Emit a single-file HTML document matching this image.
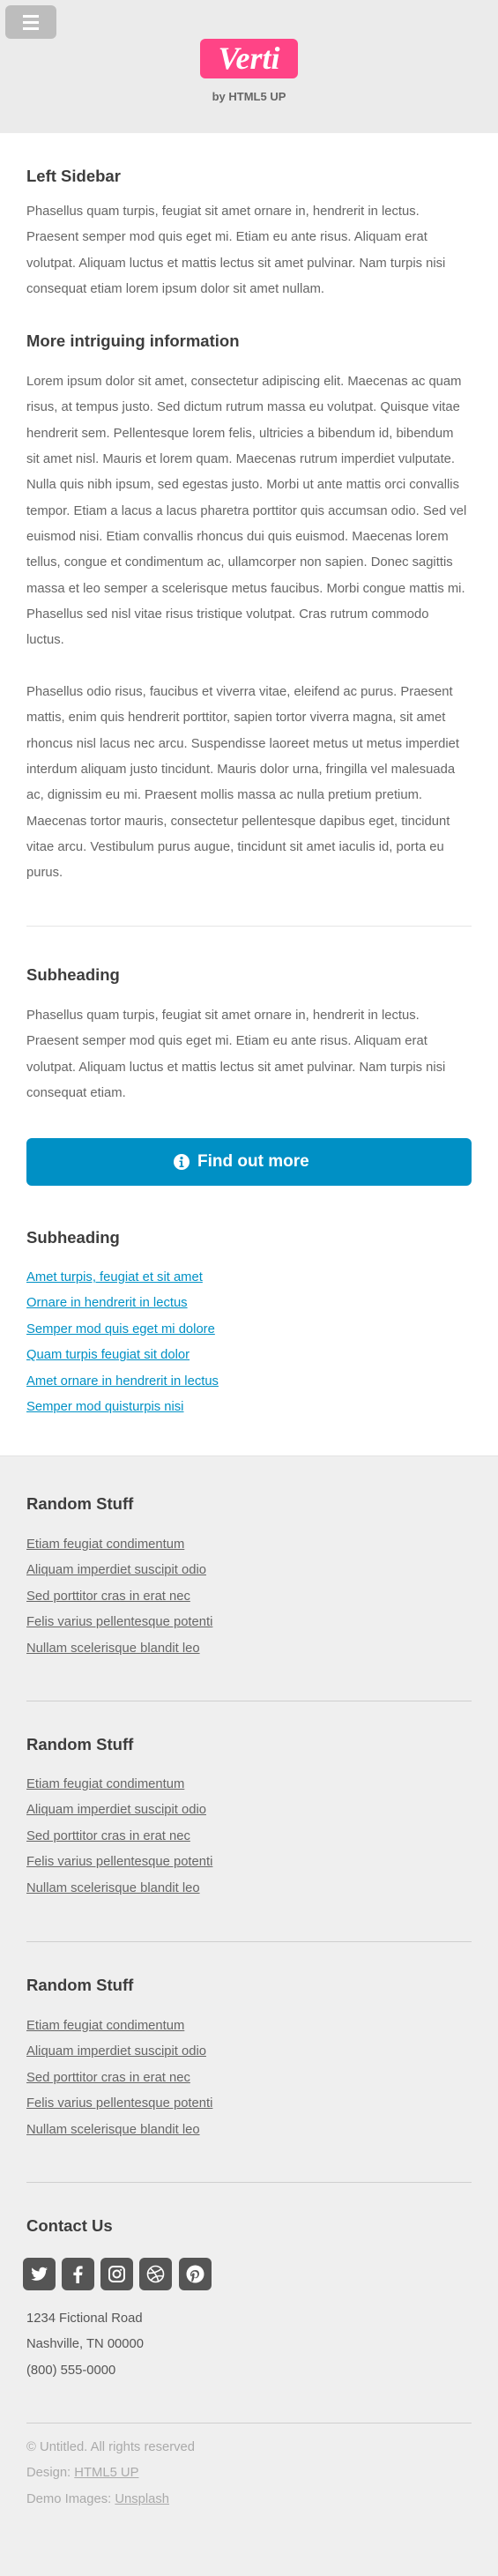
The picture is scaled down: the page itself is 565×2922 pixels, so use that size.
<!DOCTYPE html>
<html><head><meta charset="utf-8">
<style>
*{margin:0;padding:0;box-sizing:border-box}
html,body{width:565px;height:2922px;overflow:hidden}
body{position:relative;background:#efefef;font-family:"Liberation Sans",sans-serif;color:#666}
.abs{position:absolute}
#header{left:0;top:0;width:565px;height:151px;background:#ebebeb}
#main{left:0;top:151px;width:565px;height:1501px;background:#fff;border-bottom:1px solid #e2e2e2}
#footer{left:0;top:1652px;width:565px;height:1270px;background:#efefef}
.h{left:30px;font-weight:bold;font-size:18.5px;line-height:20px;color:#3d3d3d;white-space:nowrap}
.p{left:30px;font-size:14.8px;line-height:29.35px;color:#666;white-space:nowrap}
.hr{left:30px;width:505px;height:1px}
.links a{display:block;color:#0090c5;text-decoration:underline}
.flinks a{display:block;color:#666;text-decoration:underline}
.soc{width:37px;height:37px;border-radius:6px;background:#555;top:2561px}
.soc svg{position:absolute;left:0;top:0}
</style></head><body>
<div id="header" class="abs"></div>
<div class="abs" style="left:6px;top:6px;width:58px;height:38px;border-radius:6px;background:#bdbdbd"></div>
<div class="abs" style="left:26px;top:17px;width:18px;height:3px;background:#fff"></div>
<div class="abs" style="left:26px;top:24px;width:18px;height:3px;background:#fff"></div>
<div class="abs" style="left:26px;top:31px;width:18px;height:3px;background:#fff"></div>
<div class="abs" style="left:227px;top:44px;width:111px;height:45px;border-radius:6px;background:#ff4486;color:#fff;font-family:'Liberation Serif',serif;font-style:italic;font-weight:bold;font-size:36px;line-height:45px;text-align:center">Verti</div>
<div class="abs" style="left:0;width:565px;top:102px;text-align:center;font-size:13px;font-weight:bold;line-height:16px;color:#666">by HTML5 UP</div>

<div id="main" class="abs"></div>
<div class="abs h" style="top:190px">Left Sidebar</div>
<div class="abs p" style="top:226px">Phasellus quam turpis, feugiat sit amet ornare in, hendrerit in lectus.<br>Praesent semper mod quis eget mi. Etiam eu ante risus. Aliquam erat<br>volutpat. Aliquam luctus et mattis lectus sit amet pulvinar. Nam turpis nisi<br>consequat etiam lorem ipsum dolor sit amet nullam.</div>
<div class="abs h" style="top:377px">More intriguing information</div>
<div class="abs p" style="top:419px">Lorem ipsum dolor sit amet, consectetur adipiscing elit. Maecenas ac quam<br>risus, at tempus justo. Sed dictum rutrum massa eu volutpat. Quisque vitae<br>hendrerit sem. Pellentesque lorem felis, ultricies a bibendum id, bibendum<br>sit amet nisl. Mauris et lorem quam. Maecenas rutrum imperdiet vulputate.<br>Nulla quis nibh ipsum, sed egestas justo. Morbi ut ante mattis orci convallis<br>tempor. Etiam a lacus a lacus pharetra porttitor quis accumsan odio. Sed vel<br>euismod nisi. Etiam convallis rhoncus dui quis euismod. Maecenas lorem<br>tellus, congue et condimentum ac, ullamcorper non sapien. Donec sagittis<br>massa et leo semper a scelerisque metus faucibus. Morbi congue mattis mi.<br>Phasellus sed nisl vitae risus tristique volutpat. Cras rutrum commodo<br>luctus.</div>
<div class="abs p" style="top:771px">Phasellus odio risus, faucibus et viverra vitae, eleifend ac purus. Praesent<br>mattis, enim quis hendrerit porttitor, sapien tortor viverra magna, sit amet<br>rhoncus nisl lacus nec arcu. Suspendisse laoreet metus ut metus imperdiet<br>interdum aliquam justo tincidunt. Mauris dolor urna, fringilla vel malesuada<br>ac, dignissim eu mi. Praesent mollis massa ac nulla pretium pretium.<br>Maecenas tortor mauris, consectetur pellentesque dapibus eget, tincidunt<br>vitae arcu. Vestibulum purus augue, tincidunt sit amet iaculis id, porta eu<br>purus.</div>
<div class="abs hr" style="top:1050px;background:#e6e6e6"></div>
<div class="abs h" style="top:1096px">Subheading</div>
<div class="abs p" style="top:1138px">Phasellus quam turpis, feugiat sit amet ornare in, hendrerit in lectus.<br>Praesent semper mod quis eget mi. Etiam eu ante risus. Aliquam erat<br>volutpat. Aliquam luctus et mattis lectus sit amet pulvinar. Nam turpis nisi<br>consequat etiam.</div>
<div class="abs" style="left:30px;top:1291px;width:505px;height:54px;border-radius:6px;background:#0090c5"></div>
<svg class="abs" style="left:196px;top:1308px" width="20" height="20" viewBox="0 0 20 20"><circle cx="10" cy="10" r="9" fill="#fff"/><circle cx="10" cy="5.6" r="1.6" fill="#0090c5"/><path d="M7.5 8.5h3.5v6h1.5v1.5h-5v-1.5h1.5v-4.5h-1.5z" fill="#0090c5"/></svg>
<div class="abs" style="left:224px;top:1307px;font-size:19px;font-weight:bold;color:#fff;line-height:22px;white-space:nowrap">Find out more</div>
<div class="abs h" style="top:1394px">Subheading</div>
<div class="abs p links" style="top:1435px;line-height:29.4px"><a>Amet turpis, feugiat et sit amet</a><a>Ornare in hendrerit in lectus</a><a>Semper mod quis eget mi dolore</a><a>Quam turpis feugiat sit dolor</a><a>Amet ornare in hendrerit in lectus</a><a>Semper mod quisturpis nisi</a></div>

<div id="footer" class="abs"></div>
<div class="abs h" style="top:1696px">Random Stuff</div>
<div class="abs p flinks" style="top:1738px;line-height:29.4px"><a>Etiam feugiat condimentum</a><a>Aliquam imperdiet suscipit odio</a><a>Sed porttitor cras in erat nec</a><a>Felis varius pellentesque potenti</a><a>Nullam scelerisque blandit leo</a></div>
<div class="abs hr" style="top:1929px;background:#cfcfcf"></div>
<div class="abs h" style="top:1969px">Random Stuff</div>
<div class="abs p flinks" style="top:2010px;line-height:29.4px"><a>Etiam feugiat condimentum</a><a>Aliquam imperdiet suscipit odio</a><a>Sed porttitor cras in erat nec</a><a>Felis varius pellentesque potenti</a><a>Nullam scelerisque blandit leo</a></div>
<div class="abs hr" style="top:2202px;background:#cfcfcf"></div>
<div class="abs h" style="top:2242px">Random Stuff</div>
<div class="abs p flinks" style="top:2284px;line-height:29.4px"><a>Etiam feugiat condimentum</a><a>Aliquam imperdiet suscipit odio</a><a>Sed porttitor cras in erat nec</a><a>Felis varius pellentesque potenti</a><a>Nullam scelerisque blandit leo</a></div>
<div class="abs hr" style="top:2475px;background:#cfcfcf"></div>
<div class="abs h" style="top:2515px">Contact Us</div>

<div class="abs soc" style="left:26px"><svg width="37" height="37" viewBox="0 0 37 37"><path d="M28 12.5c-.7.3-1.4.5-2.2.6.8-.5 1.4-1.2 1.7-2.1-.7.4-1.6.8-2.4.9-.7-.8-1.7-1.2-2.8-1.2-2.1 0-3.9 1.7-3.9 3.9 0 .3 0 .6.1.9-3.2-.2-6.1-1.700-8-4.1-.3.6-.5 1.2-.5 1.9 0 1.3.7 2.5 1.7 3.2-.6 0-1.2-.2-1.800-.5 0 1.9 1.3 3.5 3.1 3.8-.3.1-.7.1-1 .1-.3 0-.5 0-.7-.1.5 1.5 1.9 2.7 3.6 2.7-1.3 1-3 1.7-4.8 1.7-.3 0-.6 0-.9-.1 1.7 1.1 3.8 1.8 5.9 1.8 7.1 0 11-5.9 11-11v-.5c.8-.6 1.4-1.2 1.9-2z" fill="#fff"/></svg></div>
<div class="abs soc" style="left:70px"><svg width="37" height="37" viewBox="0 0 37 37"><path d="M20 29v-9h3l.5-3.5H20v-2.2c0-1 .3-1.7 1.7-1.7h1.9V9.5c-.3 0-1.4-.1-2.7-.1-2.7 0-4.5 1.6-4.5 4.6v2.6h-3V20h3v9z" fill="#fff"/></svg></div>
<div class="abs soc" style="left:114px"><svg width="37" height="37" viewBox="0 0 37 37"><rect x="10" y="10" width="17" height="17" rx="4.5" fill="none" stroke="#fff" stroke-width="2"/><circle cx="18.5" cy="18.5" r="4" fill="none" stroke="#fff" stroke-width="2"/><circle cx="23.2" cy="13.8" r="1.1" fill="#fff"/></svg></div>
<div class="abs soc" style="left:158px"><svg width="37" height="37" viewBox="0 0 37 37"><g fill="none" stroke="#fff" stroke-width="1.6"><circle cx="18.5" cy="18.5" r="9"/><path d="M12.5 11.8c4.5 4 8 9.5 9.6 15.8"/><path d="M9.6 17.4c5 .4 10.5-.9 15.2-4.5"/><path d="M13.3 25.7c2.8-4 7.8-6 14-4.6"/></g></svg></div>
<div class="abs soc" style="left:203px"><svg width="37" height="37" viewBox="0 0 37 37"><circle cx="18.5" cy="18.5" r="10" fill="#fff"/><path d="M17.6 21.5c-.4 2-1 4-2.3 5.6l-1 .2c-.1-1.9.2-3.4.9-6.3-.5-1-.4-2.8.7-3.4 1.3-.7 2.2.5 1.7 2-.4 1.3-.7 2.6.9 2.900 2.2.3 3.2-3.3 2.3-5.2-1.3-2.6-6.4-2.2-6.4 1.5 0 .8.3 1.3.5 1.6l-.6 1c-1-.4-1.4-1.6-1.3-2.8.3-3.8 4.6-5.4 7.5-4.3 3.3 1.3 3.2 6.2.4 8.3-1.5 1.1-3.2.6-3.3-.1z" fill="#555"/></svg></div>

<div class="abs p" style="top:2616px;color:#555">1234 Fictional Road<br>Nashville, TN 00000<br>(800) 555-0000</div>
<div class="abs hr" style="top:2748px;background:#cfcfcf"></div>
<div class="abs p" style="top:2762px;color:#aaa">© Untitled. All rights reserved<br>Design: <span style="text-decoration:underline">HTML5 UP</span><br>Demo Images: <span style="text-decoration:underline">Unsplash</span></div>
</body></html>
